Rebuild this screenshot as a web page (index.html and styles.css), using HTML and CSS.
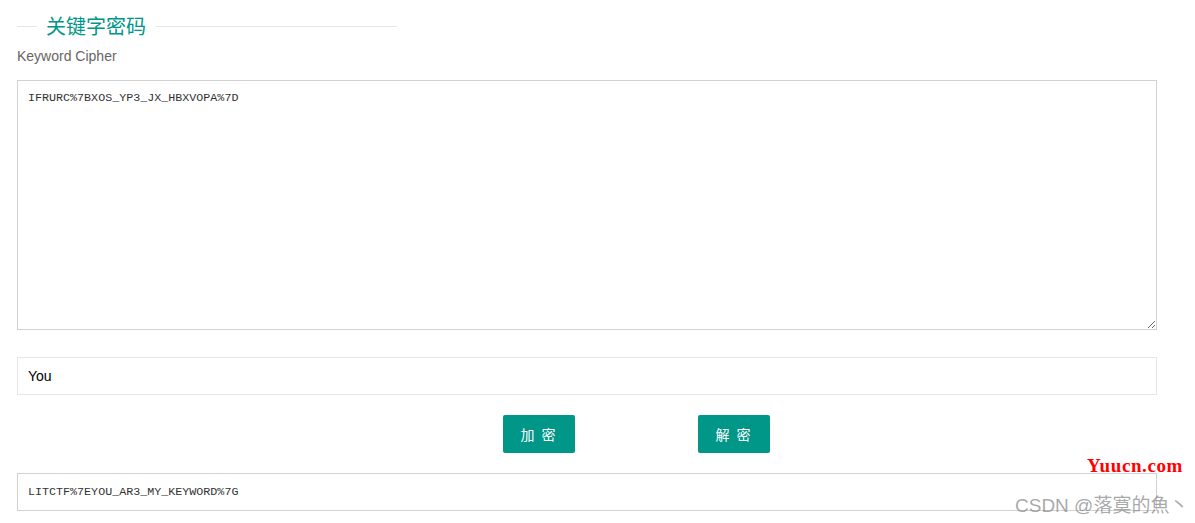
FILE: index.html
```html
<!DOCTYPE html>
<html lang="zh-CN">
<head>
    <meta charset="UTF-8">
    <title>关键字密码</title>
    <meta name="viewport" content="width=device-width, initial-scale=1">
    <link rel="stylesheet" href="styles.css">
</head>
<body>
    <div class="page">
      <div class="field-title">
        <span class="line short"></span>
        <span class="legend">关键字密码</span>
        <span class="line"></span>
      </div>
      <div class="label">Keyword Cipher</div>
      <textarea class="cipher-text">IFRURC%7BXOS_YP3_JX_HBXVOPA%7D</textarea>
      <input class="key-input" type="text" value="You">
      <div class="btn-row">
        <button class="btn">加 密</button>
        <button class="btn">解 密</button>
      </div>
      <input class="result" type="text" value="LITCTF%7EYOU_AR3_MY_KEYWORD%7G">
    </div>
    <div class="mark-site">Yuucn.com</div>
    <div class="mark-user">CSDN @落寞的魚丶</div>
</body>
</html>
```
FILE: styles.css
```css
body {
  margin: 0;
  padding: 0;
  background: #fff;
  font-family: "Liberation Sans", Arial, "Noto Sans CJK SC", sans-serif;
  color: #333;
}
.page {
  width: 1140px;
  padding: 12px 0 0 17px;
  display: flex;
  flex-direction: column;
}
.field-title {
  width: 380px;
  height: 28px;
  display: flex;
  align-items: center;
}
.field-title .line {
  flex: 1;
  height: 1px;
  background: #e6e6e6;
  margin-top: 1px;
}
.field-title .line.short {
  flex: 0 0 20px;
}
.legend {
  padding: 0 10px 0 9px;
  font-family: "Noto Sans CJK SC", sans-serif;
  font-size: 20px;
  font-weight: 400;
  color: #009688;
  line-height: 28px;
}
.label {
  font-size: 14px;
  color: #666;
  line-height: 20px;
  margin-top: 6px;
  margin-bottom: 14px;
}
.cipher-text {
  display: block;
  box-sizing: border-box;
  width: 1140px;
  height: 250px;
  margin: 0;
  padding: 10px 10px;
  border: 1px solid #d2d2d2;
  font-family: "Liberation Mono", "Noto Sans CJK SC", monospace;
  font-size: 11.7px;
  line-height: 14px;
  color: #333;
  resize: vertical;
  outline: none;
}
.key-input {
  box-sizing: border-box;
  width: 1140px;
  height: 38px;
  margin: 27px 0 0 0;
  padding: 0 10px;
  border: 1px solid #e6e6e6;
  font-family: "Liberation Sans", Arial, sans-serif;
  font-size: 14px;
  color: #000;
  outline: none;
}
.btn-row {
  display: flex;
  gap: 123px;
  margin: 20px 0 0 486px;
}
.btn {
  width: 72px;
  height: 38px;
  padding: 0;
  border: none;
  border-radius: 2px;
  background: #009688;
  color: #fff;
  font-family: "Noto Sans CJK SC", sans-serif;
  font-size: 14px;
  letter-spacing: 2px;
  cursor: pointer;
}
.result {
  box-sizing: border-box;
  width: 1140px;
  height: 38px;
  margin: 20px 0 0 0;
  padding: 0 10px;
  border: 1px solid #d2d2d2;
  font-family: "Liberation Mono", monospace;
  font-size: 11.7px;
  color: #333;
  outline: none;
}
.mark-site {
  position: absolute;
  left: 1087px;
  top: 455px;
  font-family: "Liberation Serif", serif;
  font-weight: bold;
  font-size: 19px;
  color: #f00;
  letter-spacing: 0.6px;
}
.mark-user {
  position: absolute;
  left: 1015px;
  top: 490px;
  font-family: "Liberation Sans", "Noto Sans CJK SC", sans-serif;
  font-size: 19px;
  color: rgba(130, 130, 130, 0.7);
  white-space: nowrap;
}
```
